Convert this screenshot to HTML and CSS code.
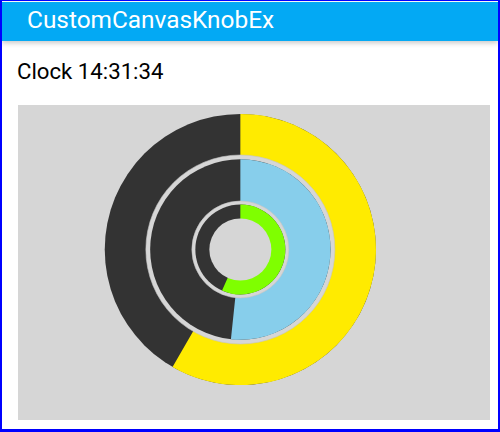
FILE: index.html
```html
<!DOCTYPE html>
<html>
<head>
<meta charset="utf-8">
<link rel="stylesheet" href="styles.css">
</head>
<body>
<div class="frame">
  <header class="appbar"><span class="title">CustomCanvasKnobEx</span></header>
  <main class="content">
    <div class="clock">Clock 14:31:34</div>
    <div class="canvas">
      <svg class="knob" width="472" height="315" viewBox="0 0 472 315" xmlns="http://www.w3.org/2000/svg">
        <circle cx="222.35" cy="144.5" r="135.6" fill="#333333"/>
        <path d="M222.35 144.5 L222.35 8.9 A135.6 135.6 0 1 1 154.55 261.93 Z" fill="#ffeb00"/>
        <circle cx="222.35" cy="144.5" r="94.5" fill="#d6d6d6" stroke="#c4c4c4" stroke-width="0.6"/>
        <circle cx="222.35" cy="144.5" r="90.2" fill="#333333"/>
        <path d="M222.35 144.5 L222.35 54.3 A90.2 90.2 0 1 1 212.92 234.2 Z" fill="#87ceeb"/>
        <circle cx="222.35" cy="144.5" r="48.5" fill="#d6d6d6" stroke="#c4c4c4" stroke-width="0.6"/>
        <circle cx="222.35" cy="144.5" r="45" fill="#333333"/>
        <path d="M222.35 144.5 L222.35 99.5 A45 45 0 1 1 204.05 185.61 Z" fill="#7fff00"/>
        <circle cx="222.35" cy="144.5" r="31" fill="#d6d6d6"/>
      </svg>
    </div>
  </main>
</div>
</body>
</html>
```
FILE: styles.css
```css
html, body {
  margin: 0;
  padding: 0;
  background: #ffffff;
}
.frame {
  box-sizing: border-box;
  width: 500px;
  height: 432px;
  border: 2px solid #0000ff;
  border-top-width: 1px;
  border-bottom-width: 3px;
  padding-top: 1px;
  background: #ffffff;
  display: flex;
  flex-direction: column;
  font-family: Roboto, "Noto Sans", sans-serif;
  overflow: hidden;
}
.appbar {
  height: 39px;
  background: #03a9f4;
  box-shadow: 0 2px 5px rgba(0, 0, 0, 0.22);
  display: flex;
  align-items: center;
  padding-left: 25px;
  position: relative;
  z-index: 1;
}
.title {
  color: #ffffff;
  font-size: 24.4px;
  line-height: 28px;
  margin-top: -3px;
}
.content {
  display: flex;
  flex-direction: column;
  padding: 0 8px 0 16px;
}
.clock {
  font-size: 22.2px;
  line-height: 26px;
  color: #000000;
  margin-top: 17px;
  margin-left: -1px;
}
.canvas {
  margin-top: 21px;
  width: 472px;
  height: 315px;
  background: #d6d6d6;
}
.knob {
  display: block;
}
```
